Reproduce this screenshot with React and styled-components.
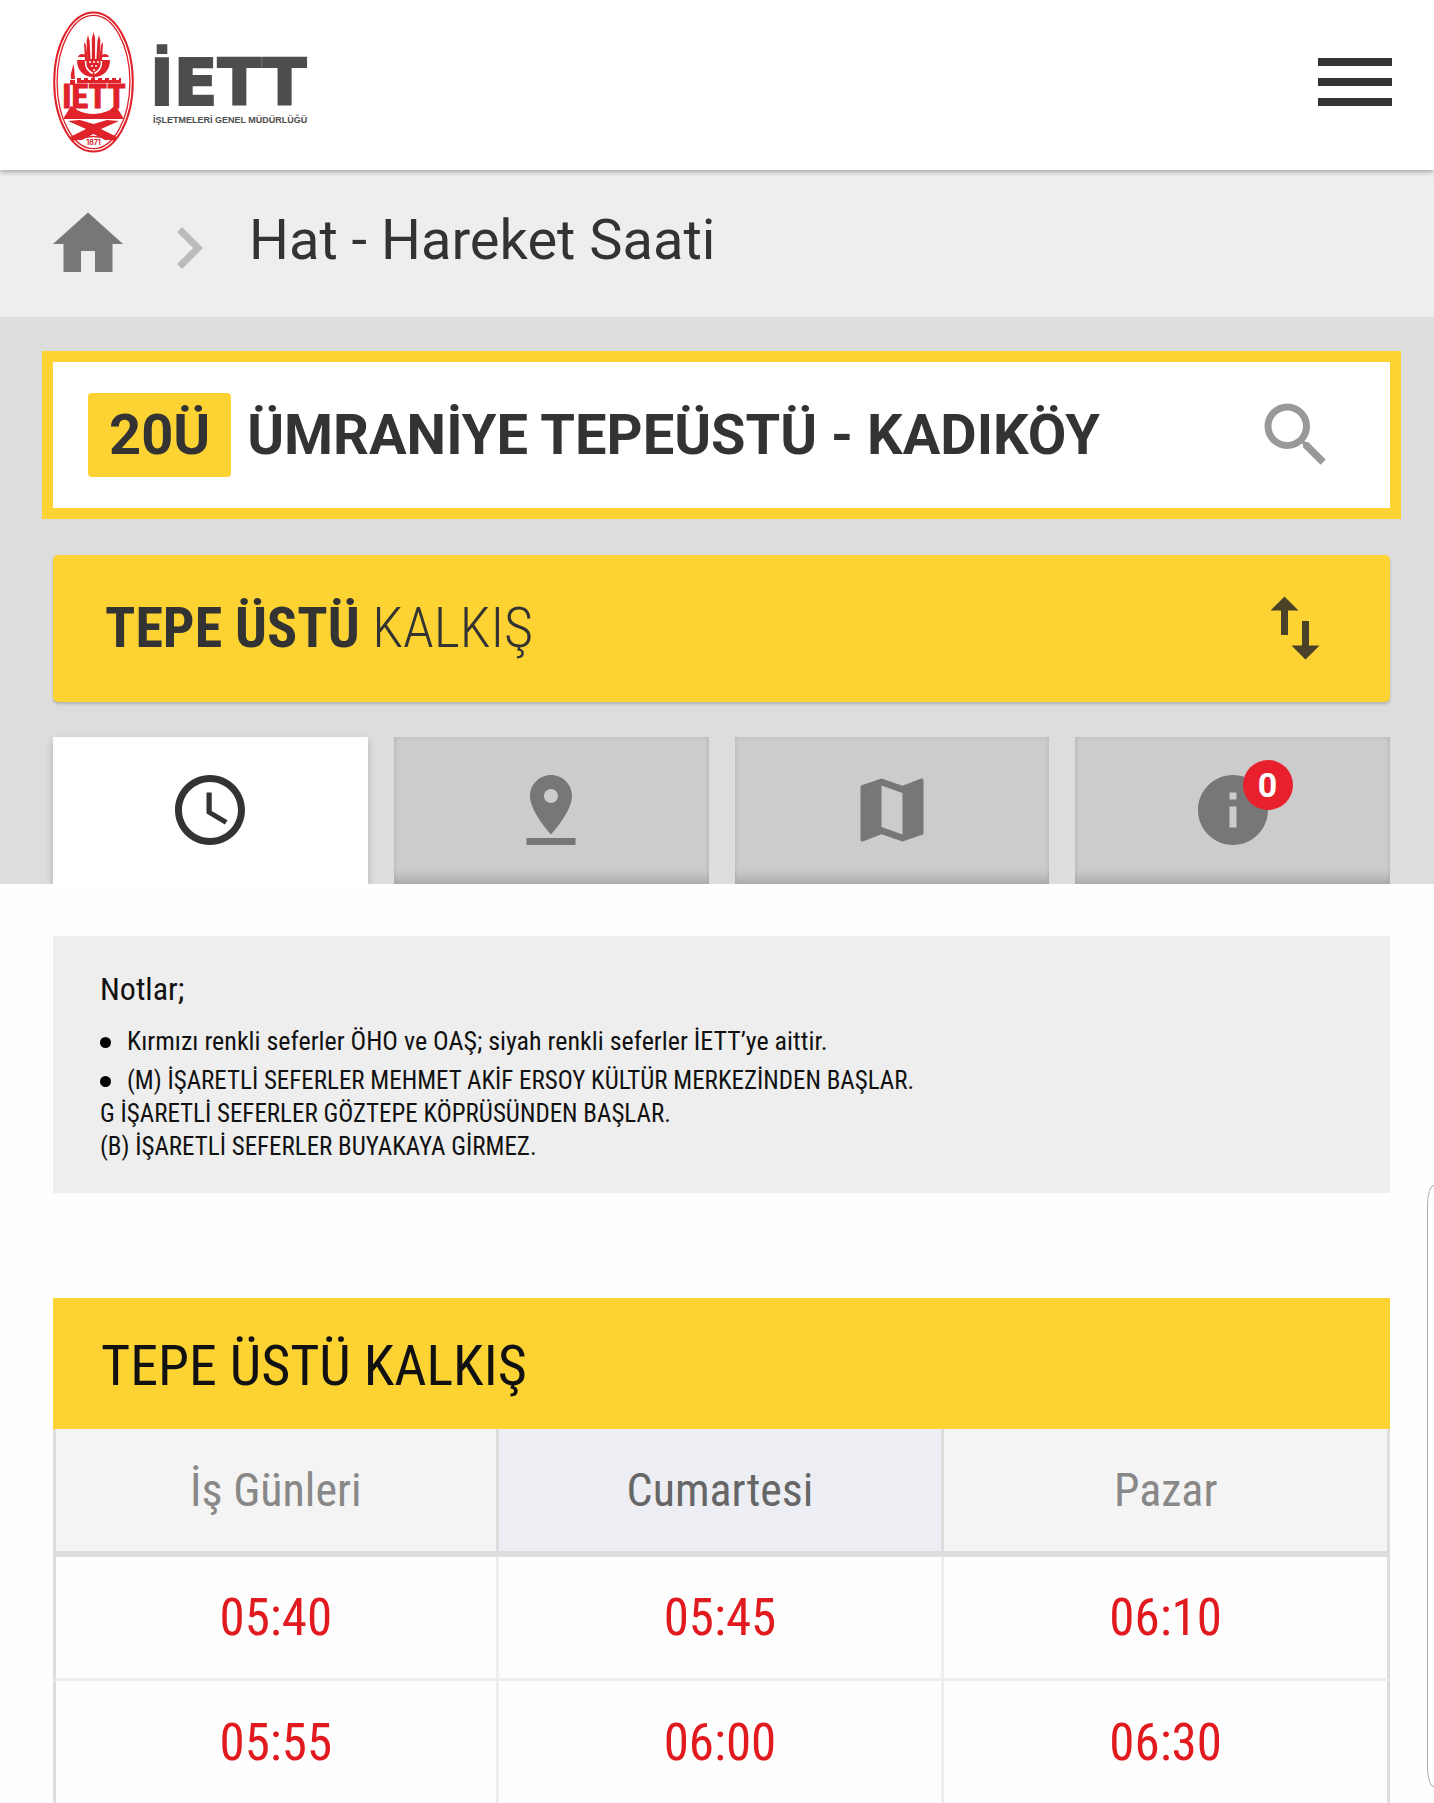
import React, { useState } from 'react'
import styled, { createGlobalStyle } from 'styled-components'
import {
  MdAccessTime,
  MdChevronRight,
  MdHome,
  MdImportExport,
  MdInfo,
  MdMap,
  MdPinDrop,
  MdSearch
} from 'react-icons/md'

const tabs = [
  { id: 'saat', label: 'Hareket saatleri', Icon: MdAccessTime },
  { id: 'durak', label: 'Duraklar', Icon: MdPinDrop },
  { id: 'harita', label: 'Harita', Icon: MdMap },
  { id: 'duyuru', label: 'Duyurular', Icon: MdInfo, count: 0 }
]

const days = ['İş Günleri', 'Cumartesi', 'Pazar']

const departures = [
  ['05:40', '05:45', '06:10'],
  ['05:55', '06:00', '06:30']
]

function Emblem() {
  return (
    <svg width="81" height="142" viewBox="0 0 81 142" aria-hidden="true">
      <ellipse cx="40.5" cy="71" rx="39.3" ry="69.6" fill="#fff" stroke="#e0232b" strokeWidth="2" />
      <ellipse cx="40.5" cy="71" rx="36.4" ry="66.7" fill="none" stroke="#e0232b" strokeWidth="1.3" />
      <g fill="#e0232b">
        {/* tulip */}
        <path d="M40.5 21l1.6 6v21h-3.2V27zM35 24l1.6 6 1 19h-3.2l-.8-19zM46 24l1.4 6-.8 19h-3.2l1-19z" />
        <path d="M33 34l-2-3 1 19h3zM48 34l2-3-1 19h-3z" />
        <path d="M26 44q4-2 6 0v2h-7zM55 44q-4-2-6 0v2h7z" />
        <path d="M24 49h8c-1 8 3 12 8.500 15C46 61 50 57 49 49h8c0 10-6 17-16.500 17S24 59 24 49z" />
        <path d="M34 48h13c2 7-1 11-6.500 14C35 59 32 55 34 48z" />
        <path d="M39.500 62h2v7h-2z" />
        {/* chimney and battlements */}
        <path d="M18 68c-1-7 2-9 2-15 2 4 1 7 2 15z" />
        <path d="M17 69h5v5h-5z" />
        <path d="M24 67h4v2h3v-2h4v2h3v-2h4v2h3v-2h4v2h3v-2h4v2h3v-2h4v2h3v-2h2v5H24z" />
      </g>
      <g fill="#fff">
        <circle cx="37" cy="51" r="1" />
        <circle cx="41" cy="51" r="1" />
        <circle cx="45" cy="51" r="1" />
        <circle cx="39" cy="55" r="1" />
        <circle cx="43" cy="55" r="1" />
        <circle cx="41" cy="59" r="1" />
      </g>
      <text
        x="41"
        y="97"
        textAnchor="middle"
        fontFamily="'Roboto Condensed', Roboto, sans-serif"
        fontWeight="700"
        fontSize="34"
        fill="#e0232b"
        stroke="#e0232b"
        strokeWidth="1"
      >
        IETT
      </text>
      {/* bridge over crossed waves */}
      <g fill="#e0232b">
        <path d="M10 108l8-13q4 1 6 4 16 8 33 0 2-3 6-4l8 13z" />
        <path d="M15 110l12-1 13.500 4 13.500-4 12 1-18 8 16 8-2 3H52l-11.500-6-11.500 6H19l-2-3 16-8z" />
      </g>
      <path d="M20 129q20.500-7 41 0" fill="none" stroke="#e0232b" strokeWidth="1.500" />
      <text
        x="40.500"
        y="134"
        textAnchor="middle"
        fontFamily="Inter, sans-serif"
        fontWeight="700"
        fontSize="7"
        fill="#e0232b"
        stroke="#fff"
        strokeWidth="2"
        paintOrder="stroke"
      >
        1871
      </text>
    </svg>
  )
}

export default function App() {
  const [active, setActive] = useState('saat')

  return (
    <Page>
      <GlobalStyle />
      <Header>
        <Logo href="#">
          <Emblem />
          <LogoText>
            <LogoName>İETT</LogoName>
            <LogoSub>İŞLETMELERİ GENEL MÜDÜRLÜĞÜ</LogoSub>
          </LogoText>
        </Logo>
        <MenuButton aria-label="Menü">
          <MenuBar />
          <MenuBar />
          <MenuBar />
        </MenuButton>
      </Header>

      <Breadcrumb>
        <HomeLink href="#" aria-label="Ana sayfa">
          <MdHome />
        </HomeLink>
        <Separator>
          <MdChevronRight />
        </Separator>
        <PageTitle>Hat - Hareket Saati</PageTitle>
      </Breadcrumb>

      <LinePanel>
        <SearchBox>
          <LineCode htmlFor="line">20Ü</LineCode>
          <LineInput id="line" defaultValue="ÜMRANİYE TEPEÜSTÜ - KADIKÖY" />
          <SearchButton aria-label="Ara">
            <MdSearch />
          </SearchButton>
        </SearchBox>

        <Direction>
          <span>
            <strong>TEPE ÜSTÜ</strong> KALKIŞ
          </span>
          <MdImportExport />
        </Direction>

        <Tabs role="tablist">
          {tabs.map(({ id, label, Icon, count }) => (
            <Tab
              key={id}
              role="tab"
              aria-label={label}
              aria-selected={active === id}
              $active={active === id}
              onClick={() => setActive(id)}
            >
              <TabIcon>
                <Icon />
                {count !== undefined && <Badge>{count}</Badge>}
              </TabIcon>
            </Tab>
          ))}
        </Tabs>
      </LinePanel>

      <Content>
        <Notes>
          <NotesTitle>Notlar;</NotesTitle>
          <NotesList>
            <Note>Kırmızı renkli seferler ÖHO ve OAŞ; siyah renkli seferler İETT’ye aittir.</Note>
            <Note $small>
              (M) İŞARETLİ SEFERLER MEHMET AKİF ERSOY KÜLTÜR MERKEZİNDEN BAŞLAR.
              <br />
              G İŞARETLİ SEFERLER GÖZTEPE KÖPRÜSÜNDEN BAŞLAR.
              <br />
              (B) İŞARETLİ SEFERLER BUYAKAYA GİRMEZ.
            </Note>
          </NotesList>
        </Notes>

        <Timetable>
          <Caption>TEPE ÜSTÜ KALKIŞ</Caption>
          <thead>
            <tr>
              {days.map((day, i) => (
                <DayCell key={day} scope="col" $today={i === 1}>
                  {day}
                </DayCell>
              ))}
            </tr>
          </thead>
          <tbody>
            {departures.map((row) => (
              <tr key={row[0]}>
                {row.map((time) => (
                  <TimeCell key={time}>{time}</TimeCell>
                ))}
              </tr>
            ))}
          </tbody>
        </Timetable>
      </Content>
      <EdgeHandle />
    </Page>
  )
}

const GlobalStyle = createGlobalStyle`
  * {
    box-sizing: border-box;
  }
  body {
    margin: 0;
    background: #fefefe;
    color: #333;
    font-family: Roboto, sans-serif;
  }
  button, input {
    font: inherit;
    color: inherit;
    border: 0;
    padding: 0;
    background: none;
  }
`

const condensed = `'Roboto Condensed', Roboto, sans-serif`

const Page = styled.div`
  position: relative;
`

const Header = styled.header`
  position: relative;
  display: flex;
  align-items: center;
  justify-content: space-between;
  height: 170px;
  padding: 0 42px 6px 53px;
  background: #fff;
  box-shadow: 0 1px 6px rgba(0, 0, 0, 0.4);
`

const Logo = styled.a`
  display: flex;
  align-items: center;
  gap: 16px;
  color: #4d4d4d;
  text-decoration: none;
`

const LogoText = styled.span`
  display: flex;
  flex-direction: column;
  padding-top: 16px;
`

const LogoName = styled.span`
  font-family: 'DejaVu Sans', sans-serif;
  font-size: 64px;
  font-weight: 700;
  line-height: 60px;
  -webkit-text-stroke: 2px #4d4d4d;
`

const LogoSub = styled.span`
  padding-left: 3px;
  font-family: 'Liberation Sans', sans-serif;
  font-size: 9px;
  font-weight: 700;
  line-height: 14px;
`

const MenuButton = styled.button`
  display: flex;
  flex-direction: column;
  gap: 12px;
  width: 74px;
`

const MenuBar = styled.span`
  height: 8px;
  background: #333;
`

const Breadcrumb = styled.nav`
  display: flex;
  align-items: center;
  height: 147px;
  padding-left: 46px;
  background: #eee;

  svg {
    display: block;
    width: 84px;
    height: 84px;
  }
`

const HomeLink = styled.a`
  color: #777;
`

const Separator = styled.span`
  margin: 8px 18px 0 17px;
  color: #bbb;
`

const PageTitle = styled.h1`
  margin: 0 0 8px;
  font-size: 56px;
  font-weight: 400;
  line-height: 64px;
`

const LinePanel = styled.section`
  padding: 34px 44px 0 53px;
  background: #ddd;
`

const SearchBox = styled.div`
  display: flex;
  align-items: center;
  height: 168px;
  margin: 0 -11px;
  padding: 0 52px 0 35px;
  background: #fff;
  border: 11px solid #fcd333;
`

const LineCode = styled.label`
  padding: 0 21px;
  background: #fcd333;
  border-radius: 4px;
  font-size: 56px;
  font-weight: 700;
  line-height: 84px;
`

const LineInput = styled.input`
  flex: 1;
  min-width: 0;
  margin-left: 16px;
  font-size: 56px;
  font-weight: 700;
  line-height: 84px;
  outline: none;
`

const SearchButton = styled.button`
  color: #999;

  svg {
    display: block;
    width: 84px;
    height: 84px;
  }
`

const Direction = styled.button`
  display: flex;
  align-items: center;
  justify-content: space-between;
  width: 100%;
  height: 147px;
  margin: 36px 0 35px;
  padding: 0 53px 2px 52px;
  background: #fcd333;
  border-radius: 5px;
  box-shadow: 0 2px 3px rgba(0, 0, 0, 0.2);
  font-family: ${condensed};
  font-size: 56px;
  font-weight: 300;

  strong {
    font-weight: 700;
  }
  svg {
    width: 84px;
    height: 84px;
    color: #4a4228;
  }
`

const Tabs = styled.div`
  display: grid;
  grid-template-columns: repeat(4, 1fr);
  gap: 26px;
`

const Tab = styled.button`
  display: flex;
  align-items: center;
  justify-content: center;
  height: 147px;
  padding-bottom: 2px;
  color: ${({ $active }) => ($active ? '#333' : '#777')};
  background: ${({ $active }) => ($active ? '#fff' : '#ccc')};
  box-shadow: ${({ $active }) =>
    $active
      ? '0 4px 8px rgba(0, 0, 0, 0.2)'
      : 'inset 0 -12px 8px -4px rgba(0, 0, 0, 0.13), inset 0 0 4px rgba(0, 0, 0, 0.1)'};

  svg {
    display: block;
    width: 84px;
    height: 84px;
  }
`

const TabIcon = styled.span`
  position: relative;
`

const Badge = styled.span`
  position: absolute;
  top: -8px;
  right: -18px;
  width: 50px;
  height: 50px;
  border-radius: 50%;
  background: #e8202d;
  color: #fff;
  font-size: 34px;
  font-weight: 700;
  line-height: 50px;
  text-align: center;
`

const Content = styled.main`
  position: relative;
  padding: 52px 44px 0 53px;
  background: #fefefe;
  color: #111;
  font-family: ${condensed};
`

const Notes = styled.section`
  height: 257px;
  padding: 35px 47px;
  background: #eee;
`

const NotesTitle = styled.h2`
  margin: 0 0 18px;
  font-size: 32px;
  font-weight: 400;
  line-height: 36px;
`

const NotesList = styled.ul`
  margin: 0;
  padding: 0;
  list-style: none;
`

const Note = styled.li`
  margin-bottom: 6px;
  font-size: ${({ $small }) => ($small ? '25px' : '26px')};
  line-height: 33px;

  &::before {
    content: '';
    display: inline-block;
    width: 11px;
    height: 11px;
    margin-right: 16px;
    border-radius: 50%;
    background: #000;
    vertical-align: 2px;
  }
`

const Timetable = styled.table`
  width: 100%;
  margin-top: 105px;
  table-layout: fixed;
  border-collapse: separate;
  border-spacing: 0;
`

const Caption = styled.caption`
  padding: 6px 48px 0;
  background: #fcd333;
  color: #111;
  font-size: 56px;
  line-height: 125px;
  text-align: left;
`

const DayCell = styled.th`
  height: 128px;
  padding: 0;
  background: ${({ $today }) => ($today ? '#edeef3' : '#f4f4f4')};
  border-right: 3px solid #ddd;
  border-bottom: 6px solid #ddd;
  color: ${({ $today }) => ($today ? '#666' : '#888')};
  font-size: 46px;
  font-weight: 400;

  &:first-child {
    border-left: 3px solid #ddd;
  }
`

const TimeCell = styled.td`
  height: 124px;
  padding: 0;
  border-right: 3px solid #eee;
  border-bottom: 3px solid #eee;
  color: #e01a1e;
  font-size: 51px;
  text-align: center;

  &:first-child {
    border-left: 3px solid #ddd;
  }
  &:last-child {
    border-right-color: #ddd;
  }
  tr:last-child > & {
    height: 123px;
    border-bottom: 0;
  }
`

/* pull-out panel that lies over the right edge of the window */
const EdgeHandle = styled.div`
  position: absolute;
  right: 0;
  bottom: 17px;
  width: 7px;
  height: 602px;
  border: 1px solid #aaa;
  border-right: 0;
  border-radius: 7px 0 0 7px / 20px 0 0 20px;
  background: #fff;
`
